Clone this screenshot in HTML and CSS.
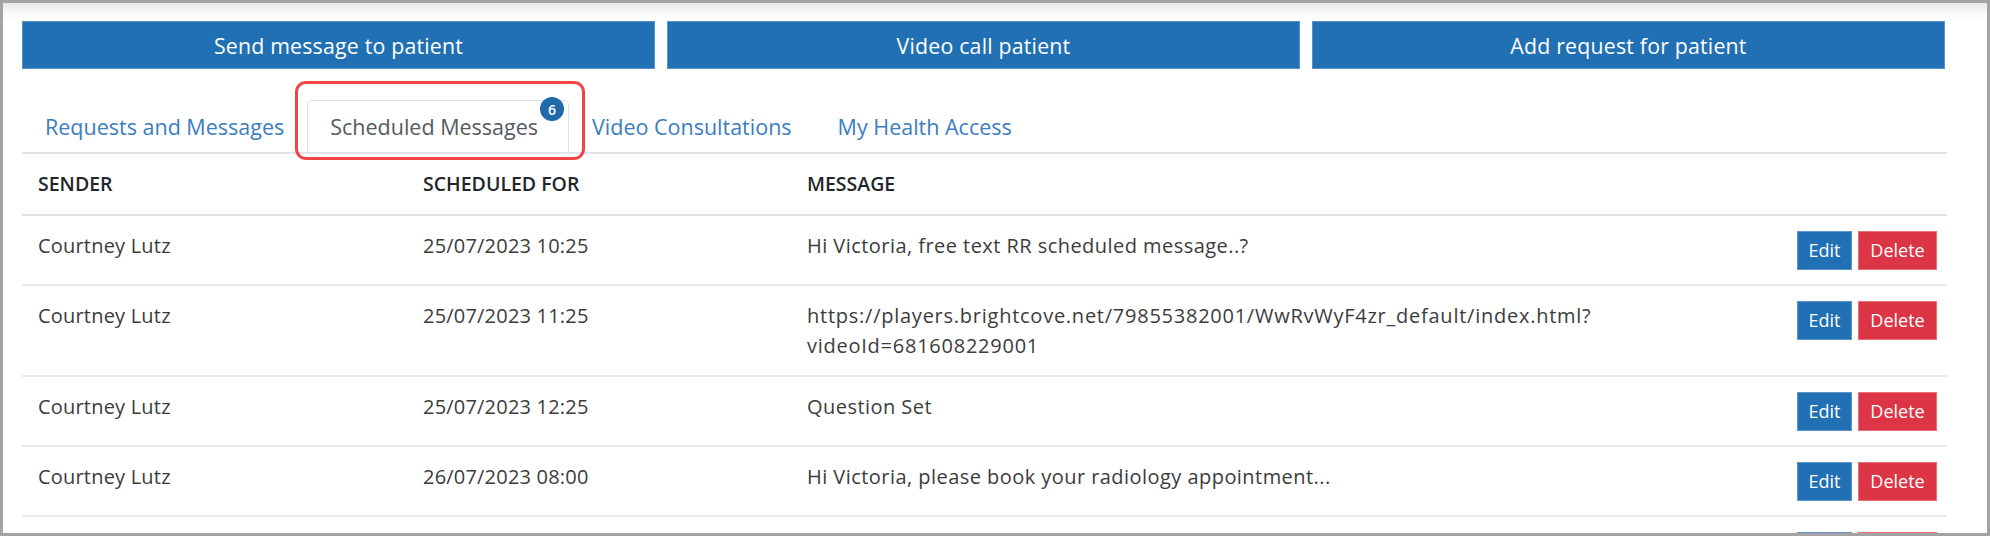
FILE: index.html
```html
<!DOCTYPE html>
<html lang="en">
<head>
<meta charset="utf-8">
<title>Scheduled Messages</title>
<link rel="stylesheet" href="styles.css">
</head>
<body>
<div class="frame">
  <div class="actions">
    <button class="action-btn">Send message to patient</button>
    <button class="action-btn">Video call patient</button>
    <button class="action-btn">Add request for patient</button>
  </div>

  <nav class="tabs">
    <a class="tab">Requests and Messages</a>
    <a class="tab tab-active">Scheduled Messages<span class="badge">6</span><span class="highlight"></span></a>
    <a class="tab">Video Consultations</a>
    <a class="tab">My Health Access</a>
  </nav>

  <table class="sched">
    <colgroup>
      <col class="c-sender">
      <col class="c-when">
      <col class="c-msg">
      <col class="c-act">
    </colgroup>
    <thead>
      <tr>
        <th>SENDER</th>
        <th>SCHEDULED FOR</th>
        <th>MESSAGE</th>
        <th></th>
      </tr>
    </thead>
    <tbody>
      <tr>
        <td>Courtney Lutz</td>
        <td>25/07/2023 10:25</td>
        <td class="msg">Hi Victoria, free text RR scheduled message..?</td>
        <td class="act"><button class="btn btn-edit">Edit</button><button class="btn btn-del">Delete</button></td>
      </tr>
      <tr>
        <td>Courtney Lutz</td>
        <td>25/07/2023 11:25</td>
        <td class="msg msg-url">https://players.brightcove.net/79855382001/WwRvWyF4zr_default/index.html?<br>videoId=681608229001</td>
        <td class="act"><button class="btn btn-edit">Edit</button><button class="btn btn-del">Delete</button></td>
      </tr>
      <tr>
        <td>Courtney Lutz</td>
        <td>25/07/2023 12:25</td>
        <td class="msg">Question Set</td>
        <td class="act"><button class="btn btn-edit">Edit</button><button class="btn btn-del">Delete</button></td>
      </tr>
      <tr>
        <td>Courtney Lutz</td>
        <td>26/07/2023 08:00</td>
        <td class="msg">Hi Victoria, please book your radiology appointment...</td>
        <td class="act"><button class="btn btn-edit">Edit</button><button class="btn btn-del">Delete</button></td>
      </tr>
      <tr class="row-peek">
        <td></td>
        <td></td>
        <td></td>
        <td class="act"><span class="btn btn-edit"></span><span class="btn btn-del"></span></td>
      </tr>
    </tbody>
  </table>
</div>
</body>
</html>
```

FILE: styles.css
```css
* {
  box-sizing: border-box;
}

html, body {
  margin: 0;
  padding: 0;
  background: #ffffff;
}

body {
  font-family: "Open Sans", "Liberation Sans", sans-serif;
  color: #3a3a3a;
}

.frame {
  width: 1990px;
  height: 536px;
  overflow: hidden;
  border: 3px solid #a3a3a3;
  padding: 18px 40px 0 19px;
  background: linear-gradient(#e6e6e6 0px, #f6f6f6 8px, #ffffff 18px);
}

/* top action buttons */
.actions {
  display: grid;
  grid-template-columns: repeat(3, 1fr);
  column-gap: 12px;
  padding-right: 2px;
}

.action-btn {
  height: 48px;
  margin: 0;
  border: 1px solid #5a93c8;
  background: #2170b3;
  color: #ffffff;
  font-family: inherit;
  font-size: 21.3px;
  font-weight: 500;
  letter-spacing: 0.2px;
  cursor: pointer;
}

/* tabs */
.tabs {
  display: flex;
  margin-top: 31px;
  border-bottom: 2px solid #e1e4e8;
}

.tab {
  position: relative;
  display: flex;
  align-items: center;
  height: 52px;
  padding: 0 22px;
  border: 1px solid transparent;
  border-bottom: 0;
  color: #3b7dbf;
  font-size: 21.5px;
  text-decoration: none;
  white-space: nowrap;
  cursor: pointer;
}

.tab-active {
  padding-right: 30px;
  color: #555a60;
  border-color: #dde1e6;
  border-radius: 5px 5px 0 0;
  background: #ffffff;
}

.badge {
  position: absolute;
  top: -4px;
  right: 4px;
  width: 24px;
  height: 24px;
  border-radius: 50%;
  background: #1f6aab;
  color: #ffffff;
  font-size: 14px;
  font-weight: 600;
  display: flex;
  align-items: center;
  justify-content: center;
}

.highlight {
  position: absolute;
  left: -13px;
  top: -20px;
  right: -17px;
  bottom: -8px;
  border: 3px solid #f04545;
  border-radius: 11px;
  pointer-events: none;
}

/* table */
.sched {
  width: 100%;
  border-collapse: collapse;
  table-layout: fixed;
}

.c-sender { width: 385px; }
.c-when { width: 384px; }
.c-act { width: 166px; }

.sched th {
  text-align: left;
  font-size: 19.5px;
  font-weight: 600;
  color: #23272b;
  padding: 15px 16px;
  line-height: 30px;
  border-bottom: 2px solid #dee2e6;
}

.sched td {
  vertical-align: top;
  font-size: 20px;
  line-height: 30px;
  padding: 15px 16px 14px;
  color: #3c3c3c;
  border-bottom: 2px solid #e9eaec;
  white-space: nowrap;
  letter-spacing: 0.2px;
}

.sched td.msg {
  letter-spacing: 0.45px;
}

.sched td.msg-url {
  letter-spacing: 0.75px;
}

.sched td.act {
  text-align: right;
  padding-right: 14px;
  font-size: 0;
  line-height: 0;
}

.btn {
  display: inline-block;
  height: 39px;
  margin: 0;
  padding: 0;
  border: 1px solid transparent;
  color: #ffffff;
  font-family: inherit;
  font-size: 18px;
  font-weight: 500;
  line-height: 37px;
  letter-spacing: 0;
  text-align: center;
  vertical-align: top;
  cursor: pointer;
}

.btn-edit {
  width: 55px;
  background: #2170b3;
  border-color: #5f96c9;
}

.btn-del {
  width: 79px;
  margin-left: 6px;
  background: #dc3545;
  border-color: #e8707b;
}
```
